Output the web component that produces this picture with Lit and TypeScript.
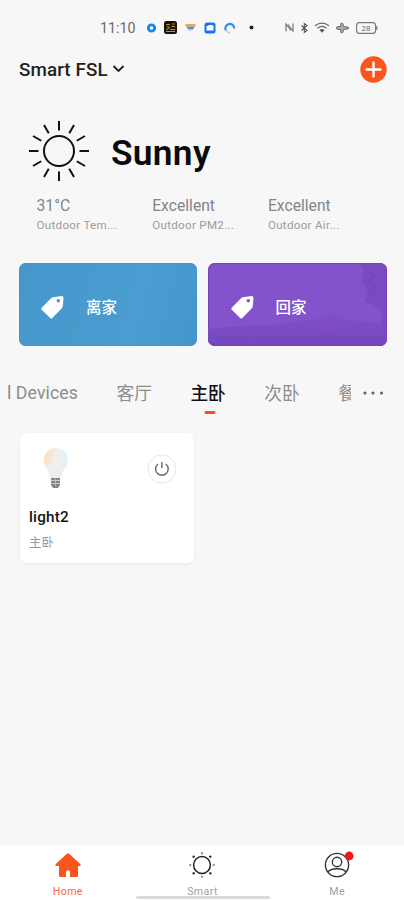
import { LitElement, html, css, svg } from "lit";
import { customElement } from "lit/decorators.js";
import { classMap } from "lit/directives/class-map.js";

const rays = [0, 30, 60, 90, 120, 150, 180, 210, 240, 270, 300, 330];
const dots = [0, 45, 90, 135, 180, 225, 270, 315];

@customElement("status-bar")
class StatusBar extends LitElement {
  static styles = css`
    :host { display: block; }
    .bar { height: 55px; box-sizing: border-box; display: flex; align-items: center; padding-left: 100px; font-size: 14.3px; color: #6b6b6b; }
    .time { width: 46px; padding-top: 1px; }
    svg { display: block; flex: none; }
    .g1 { margin-left: 7px; } .g2 { margin-left: 8px; } .g3 { margin-left: 13px; }
    .g4 { margin-left: 31px; }
    .g5 { margin-left: 6px; }
    .g6 { margin-left: 6px; }
    .wifi { margin-left: 5px; }
    .plane { margin-left: 5px; }
  `;
  render() {
    return html`<div class="bar">
      <span class="time">11:10</span>
      <svg width="11" height="12"><circle cx="5.5" cy="6" r="3.2" fill="#fff" stroke="#1687ea" stroke-width="2.8"/></svg>
      <svg class="g1" width="13" height="13"><rect width="13" height="13" rx="2.5" fill="#171207"/><path d="M2 3.5H6M8 3H11M3 5.5L6 6.5M7.5 5.5H11M2 8.5L5 7.5M6 8.5H11M2 10.5H11" stroke="#bd9630" stroke-width="1.2"/></svg>
      <svg class="g2" width="11" height="12"><path d="M.5 2h10v2.8H.5z" fill="#f0a35a"/><path d="M1.5 4.8h8L8 7.5H3z" fill="#4a92d8"/><path d="M3.5 7.5h4v1.5h-4z" fill="#b9d9f5"/></svg>
      <svg class="g2" width="12" height="12"><rect x=".5" y=".5" width="11" height="11" rx="2.5" fill="#1777e8"/><path d="M2.5 4H4L5 3H8L9.5 4V8.5H2.5z" fill="#fff"/></svg>
      <svg class="g2" width="12" height="12"><path d="M2 8.5A4.3 4.3 0 0 1 9.7 4.2L10.3 6.5" fill="none" stroke="#2d90ea" stroke-width="2.2"/><path d="M2.5 9.2A4.3 4.3 0 0 0 6 10.4" fill="none" stroke="#9bcff6" stroke-width="1.6"/></svg>
      <svg class="g3" width="5" height="5"><circle cx="2.5" cy="2.5" r="2" fill="#222"/></svg>
      <svg class="g4" width="9" height="11" fill="none" stroke="#777" stroke-width="1.2"><path d="M1 9.5V2L6 8.5M3 2.5L8 9V1.5"/></svg>
      <svg class="g5" width="9" height="12" fill="none" stroke="#555" stroke-width="1.1"><path d="M1.5 3.5L7 8.5L4.3 10.5V1.5L7 3.5L1.5 8.5"/></svg>
      <svg class="wifi" width="16" height="12" fill="none" stroke="#666" stroke-width="1.2"><path d="M1 3.8Q8 -1.4 15 3.8M3.5 6.2Q8 2.7 12.5 6.2"/><path d="M5.5 8Q8 6.2 10.5 8L8 10.8Z" fill="#555" stroke="none"/></svg>
      <svg class="plane" width="15" height="12"><path d="M1 6l1.6-1.5H5.5L6 1.2l1.8.3.8 3 4.4.6 1 .9-1 .9-4.4.6-.8 3-1.8.3-.5-3.3H2.6z" fill="#aaa" stroke="#555" stroke-width=".8"/></svg>
      <svg class="g6" width="22" height="12"><rect x=".6" y=".6" width="19" height="10.8" rx="3" fill="none" stroke="#777" stroke-width="1.1"/><path d="M20.8 4v4" stroke="#777" stroke-width="1.2"/><text x="10" y="8.8" text-anchor="middle" font-size="8" font-family="Roboto" fill="#666">28</text></svg>
    </div>`;
  }
}

@customElement("weather-panel")
class WeatherPanel extends LitElement {
  static styles = css`
    :host { display: block; }
    .now { display: flex; align-items: center; height: 64px; padding-left: 28px; }
    svg { display: block; }
    .name { margin-left: 21px; font-size: 35.3px; font-weight: 600; color: #0b0b0b; line-height: 40px; letter-spacing: 0.3px; padding-top: 4px; }
    .stats { display: grid; grid-template-columns: repeat(3, 115.7px); padding-left: 36.5px; margin-top: 13px; }
    .value { font-size: 15.7px; line-height: 20px; color: #858585; }
    .label { font-size: 11.6px; line-height: 14px; color: #9b9b9b; letter-spacing: 0.3px; margin-top: 2px; }
  `;
  render() {
    const stats = [["31°C", "Outdoor Tem..."], ["Excellent", "Outdoor PM2..."], ["Excellent", "Outdoor Air..."]];
    return html`
      <div class="now">
        <svg width="62" height="62" viewBox="-31 -31 62 62" fill="none" stroke="#111" stroke-width="2">
          <circle r="15"/>${rays.map((a) => svg`<path d="M0 -20.5V-30" transform="rotate(${a})"/>`)}
        </svg>
        <div class="name">Sunny</div>
      </div>
      <div class="stats">${stats.map(([v, l]) => html`<div><div class="value">${v}</div><div class="label">${l}</div></div>`)}</div>`;
  }
}

@customElement("scene-card")
class SceneCard extends LitElement {
  static properties = { label: {}, tone: {} };
  declare label: string;
  declare tone: string;
  static styles = css`
    :host { display: block; }
    .card { position: relative; overflow: hidden; height: 83px; border-radius: 7px; display: flex; align-items: center; padding: 3px 0 0 21px; box-sizing: border-box; color: #fff; font-size: 15.5px; font-weight: 500; }
    .blue { background: linear-gradient(105deg, #4697cb, #4a9dd0 65%, #4497cd); box-shadow: inset 0 0 0 1px #4497cc; }
    .purple { background: #8253ca; box-shadow: inset 0 0 0 1px #7746bd; }
    .scene { position: absolute; inset: 0; }
    .tag { position: relative; margin-top: 2px; }
    .text { position: relative; margin-left: 21px; }
    .purple .tag { margin-left: 1px; }
    .purple .text { margin-left: 20.5px; }
  `;
  render() {
    const purple = this.tone === "purple";
    return html`<div class=${classMap({ card: true, blue: !purple, purple })}>
      ${purple ? html`<svg class="scene" width="179" height="83">
        <defs><linearGradient id="hill" x1="0" y1="0" x2="0" y2="1"><stop offset="0" stop-color="#7a4bc4" stop-opacity=".5"/><stop offset="1" stop-color="#7446be"/></linearGradient></defs>
        <path d="M0 66Q35 62 60 63L90 58L108 56L123 51L140 57L179 60V83H0Z" fill="url(#hill)"/>
        <path d="M151 0L156 8L154 19L160 29L157 38L166 42L173 49L174 60L179 62V0Z" fill="#7443b8" opacity=".55"/>
        <path d="M115 69L118 60L122 55L126 60L128 69Z" fill="#8a4abb" opacity=".4"/>
        <path d="M160 8l6 4-5 6 8 4-5 7" fill="none" stroke="#65399f" stroke-width="2" opacity=".18"/>
      </svg>` : ""}
      <svg class="tag" width="25" height="25"><path fill="#fff" fill-rule="evenodd" d="M13 2.2L21.5 1Q23.5 1 23.5 3L22.8 11Q22.7 12.3 21.8 13.2L12.3 23Q11.3 24 10.2 23L1.7 14.8Q.7 13.8 1.7 12.8L11.3 3Q12 2.3 13 2.2ZM18.3 4a1.7 1.7 0 1 0 .01 0Z"/></svg>
      <span class="text">${this.label}</span>
    </div>`;
  }
}

@customElement("room-tabs")
class RoomTabs extends LitElement {
  static styles = css`
    :host { display: block; }
    .row { display: flex; height: 48px; padding-left: 7px; align-items: flex-start; }
    .strip { width: 344px; overflow: hidden; display: flex; white-space: nowrap; height: 48px; font-size: 17.7px; line-height: 24px; color: #8c8c8c; }
    .tab { flex: none; margin-right: 38.5px; padding-top: 12px; }
    .first { padding-top: 11px; width: 71px; letter-spacing: 0.08px; }
    .on { color: #111; font-weight: 500; }
    .on::after { content: ""; display: block; width: 11px; height: 3px; border-radius: 1.5px; background: #f2502b; margin: 5px auto 0; transform: translateX(1.5px); }
    svg { margin: 20px 0 0 11px; }
  `;
  render() {
    return html`<div class="row"><div class="strip">
      <span class="tab first">l Devices</span><span class="tab">客厅</span><span class="tab on">主卧</span><span class="tab">次卧</span><span class="tab">餐</span>
    </div><svg width="24" height="6" fill="#666"><circle cx="3" cy="3" r="1.6"/><circle cx="11" cy="3" r="1.6"/><circle cx="19.5" cy="3" r="1.6"/></svg></div>`;
  }
}

@customElement("device-card")
class DeviceCard extends LitElement {
  static styles = css`
    :host { display: block; }
    .card { width: 174px; height: 130px; box-sizing: border-box; border-radius: 7px; background: #fff; box-shadow: 0 1px 3px rgba(0,0,0,.06); padding: 14px 17px 0 9px; }
    .top { display: flex; justify-content: space-between; height: 58px; }
    .bulb { margin-left: 14px; }
    .power { margin-top: 7px; }
    .name { font-size: 15.3px; font-weight: 500; color: #151515; line-height: 20px; letter-spacing: 0.2px; margin-top: 2px; }
    .room { font-size: 12.4px; color: #999; line-height: 18px; margin-top: 7px; }
  `;
  render() {
    return html`<div class="card">
      <div class="top">
        <svg class="bulb" width="26" height="44" viewBox="0 0 26 44">
          <defs><linearGradient id="glass" x1="0" y1=".1" x2="1" y2=".4"><stop offset="0" stop-color="#fbdcae"/><stop offset=".5" stop-color="#f3eeea"/><stop offset="1" stop-color="#dcf1fb"/></linearGradient>
          <linearGradient id="neck" x1="0" y1="0" x2="0" y2="1"><stop offset=".45" stop-color="#f0f0f0" stop-opacity="0"/><stop offset=".75" stop-color="#ededed"/></linearGradient></defs>
          <path d="M13 1C6 1 1 6 1 13C1 20 6 22 7.2 31H17.8C19 22 25 20 25 13C25 6 20 1 13 1Z" fill="url(#glass)"/>
          <path d="M13 1C6 1 1 6 1 13C1 20 6 22 7.2 31H17.8C19 22 25 20 25 13C25 6 20 1 13 1Z" fill="url(#neck)"/>
          <path d="M8 31H17V38L15 41H10L8 38Z" fill="#858585"/><path d="M8 33.5H17M8 36.5H17" stroke="#c8c8c8"/><path d="M12.5 31.5V39" stroke="#bbb"/>
        </svg>
        <svg class="power" width="30" height="30" fill="none"><circle cx="15" cy="15" r="14" stroke="#e8e8e8"/><path d="M11 10A6.3 6.3 0 1 0 18.8 10" stroke="#696969" stroke-width="1.4"/><path d="M14.9 8V14" stroke="#696969" stroke-width="1.4"/></svg>
      </div>
      <div class="name">light2</div>
      <div class="room">主卧</div>
    </div>`;
  }
}

@customElement("bottom-nav")
class BottomNav extends LitElement {
  static styles = css`
    :host { display: block; }
    .nav { height: 54px; background: #fff; display: grid; grid-template-columns: repeat(3, 1fr); position: relative; }
    .item { display: flex; flex-direction: column; align-items: center; padding: 4px 0 0 1px; font-size: 10.6px; line-height: 14px; color: #a0a0a0; letter-spacing: 0.4px; }
    .active { color: #f9673a; }
    svg { display: block; margin-bottom: 5px; }
    .handle { position: absolute; left: 136px; bottom: 1px; width: 134px; height: 3px; border-radius: 2px; background: #dadada; }
  `;
  render() {
    return html`<div class="nav">
      <div class="item active"><svg width="30" height="30"><path fill="#fb551d" d="M13.8 3.8Q15 2.8 16.2 3.8L27.5 14.2Q28.2 15.7 27 16H25V25.5Q25 27 23.5 27H17V22Q17 20.3 15 20.3T13 22V27H7.5Q6 27 6 25.5V16H3.2Q1.8 15.7 2.6 14.2Z"/></svg>Home</div>
      <div class="item"><svg width="30" height="30" viewBox="-15 -15 30 30"><circle r="8.4" fill="none" stroke="#222" stroke-width="1.5"/>${dots.map((a, i) => svg`<circle cy="-11.8" r="1.2" fill=${i % 2 ? "#222" : "#999"} transform="rotate(${a})"/>`)}</svg>Smart</div>
      <div class="item"><svg width="34" height="30" fill="none" stroke="#333" stroke-width="1.4"><circle cx="17" cy="15" r="11.6"/><circle cx="17" cy="12" r="4.7"/><path d="M8 22Q10 18.7 17 18.7T26 22"/><circle cx="29.2" cy="6" r="4.4" fill="#fa1414" stroke="none"/></svg>Me</div>
      <div class="handle"></div>
    </div>`;
  }
}

@customElement("app-root")
class AppRoot extends LitElement {
  static styles = css`
    :host { display: block; font-family: Roboto, "Noto Sans CJK SC", sans-serif; }
    .page { width: 404px; height: 900px; overflow: hidden; background: #f7f7f7; display: flex; flex-direction: column; }
    .head { display: flex; align-items: center; height: 28px; padding: 0 17px 0 19px; }
    .home { font-size: 18.8px; font-weight: 500; color: #222; letter-spacing: 0.1px; padding-top: 1px; }
    .chev { margin: 0 auto 0 4px; }
    weather-panel { margin-top: 36px; }
    .scenes { display: grid; grid-template-columns: 178px 179px; gap: 11px; padding-left: 19px; margin-top: 31px; }
    room-tabs { margin-top: 24px; }
    device-card { margin: 15px 0 0 20px; }
    bottom-nav { margin-top: auto; }
  `;
  render() {
    return html`<div class="page">
      <status-bar></status-bar>
      <div class="head">
        <span class="home">Smart FSL</span>
        <svg class="chev" width="13" height="10"><path d="M1.5 2L6.5 7L11.5 2" fill="none" stroke="#222" stroke-width="1.9"/></svg>
        <svg width="27" height="27"><circle cx="13.5" cy="13.5" r="13.2" fill="#fb5519"/><path d="M13.5 6.5V20.5M6.5 13.5H20.5" stroke="#fff" stroke-width="2.4" stroke-linecap="round"/></svg>
      </div>
      <weather-panel></weather-panel>
      <div class="scenes">
        <scene-card label="离家" tone="blue"></scene-card>
        <scene-card label="回家" tone="purple"></scene-card>
      </div>
      <room-tabs></room-tabs>
      <device-card></device-card>
      <bottom-nav></bottom-nav>
    </div>`;
  }
}
